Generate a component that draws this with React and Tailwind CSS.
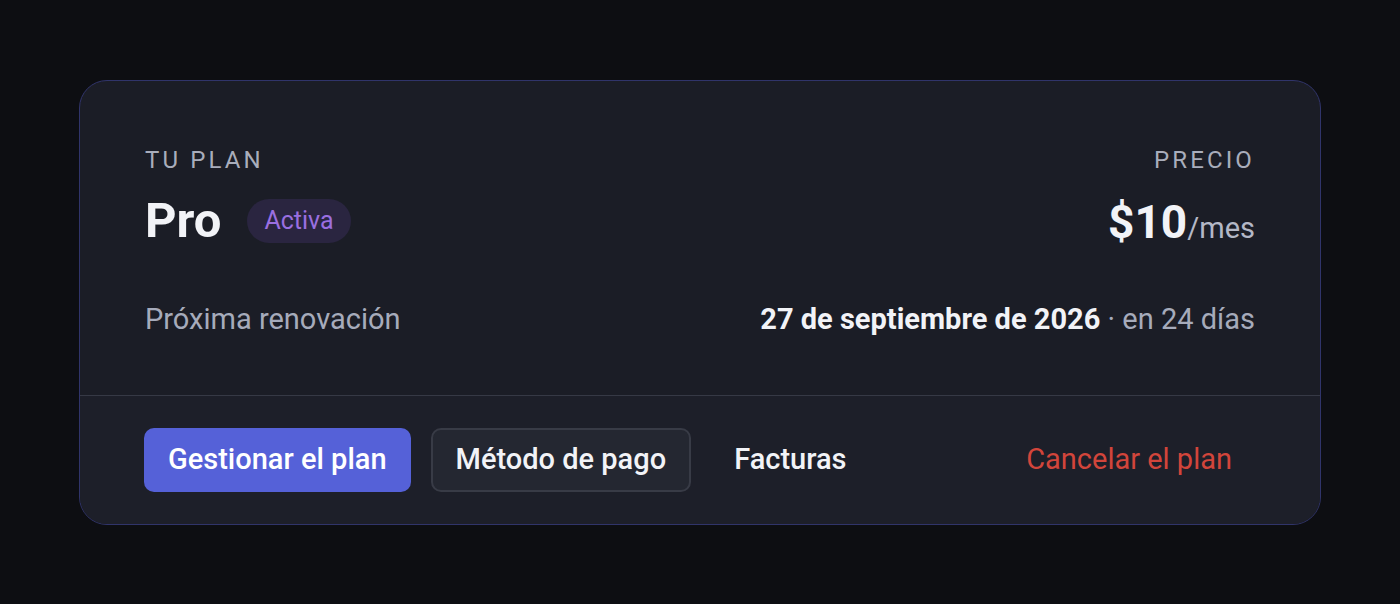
import React from "react";

const font = { fontFamily: "Roboto, 'Noto Sans', sans-serif" };

const App = () => {
  return (
    <div
      className="min-h-screen w-full bg-[#0d0e12] flex items-center justify-center"
      style={font}
    >
      <div className="w-[1242px] rounded-[28px] border border-[#30346a] bg-[#1b1d26] overflow-hidden">
        {/* Plan summary */}
        <div className="px-[65px] pt-[63px] pb-[56px]">
          <div className="flex justify-between">
            <div>
              <div className="text-[24px] leading-[32px] tracking-[0.13em] text-[#a9adbb]">
                TU PLAN
              </div>
              <div className="mt-[17px] flex items-center gap-[26px] h-[56px]">
                <span className="text-[49px] leading-[56px] font-bold text-[#f2f3f7]">
                  Pro
                </span>
                <span className="h-[44px] px-[17px] rounded-full bg-[#2a2540] text-[#9a6fe0] text-[25px] leading-[44px]">
                  Activa
                </span>
              </div>
            </div>
            <div className="text-right">
              <div className="text-[24px] leading-[32px] tracking-[0.13em] text-[#a9adbb]">
                PRECIO
              </div>
              <div className="mt-[17px] pt-[2px] flex items-baseline justify-end h-[56px]">
                <span className="text-[46px] leading-[54px] font-bold text-[#f2f3f7]">
                  $10
                </span>
                <span className="text-[29px] text-[#b4b8c6]">/mes</span>
              </div>
            </div>
          </div>

          <div className="mt-[50px] flex justify-between items-center text-[29px] leading-[40px]">
            <span className="text-[#a6abbb]">Próxima renovación</span>
            <span className="text-[#a6abbb]">
              <span className="font-bold text-[#f2f3f7]">27 de septiembre de 2026</span>
              {" · en 24 días"}
            </span>
          </div>
        </div>

        {/* Actions */}
        <div className="border-t border-[#363945] bg-[#1d1f29] px-[64px] py-[32px] flex items-center gap-[20px]">
          <button className="h-[64px] px-[24px] rounded-[10px] bg-[#5561d8] text-white text-[29px] font-medium">
            Gestionar el plan
          </button>
          <button className="h-[64px] px-[23px] rounded-[10px] bg-[#242731] border-2 border-[#383b46] text-[#f2f3f7] text-[29px] font-medium">
            Método de pago
          </button>
          <button className="h-[64px] px-[23px] rounded-[10px] text-[#f2f3f7] text-[29px] font-medium">
            Facturas
          </button>
          <button className="ml-auto h-[64px] px-[24px] rounded-[10px] text-[#d2453b] text-[29px]">
            Cancelar el plan
          </button>
        </div>
      </div>
    </div>
  );
};

export default App;
